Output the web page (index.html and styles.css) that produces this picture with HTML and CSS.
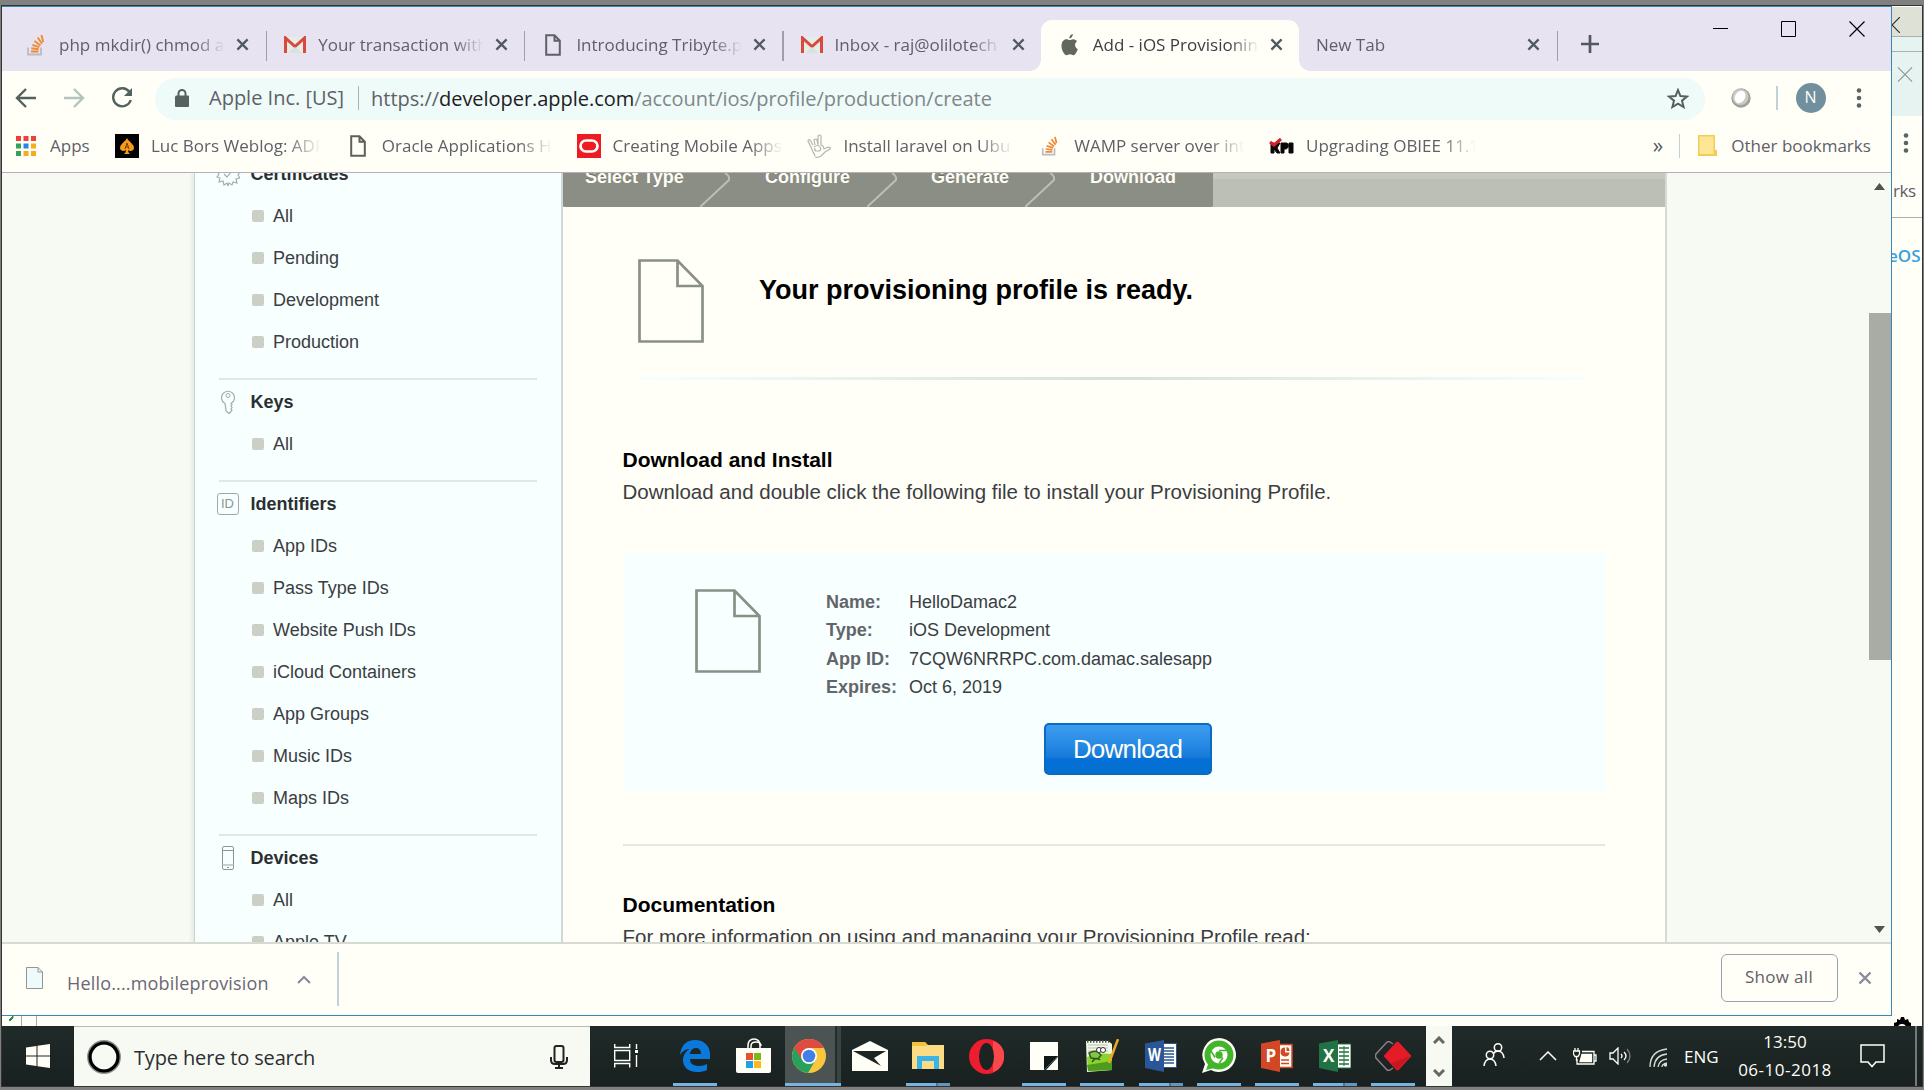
FILE: index.html
```html
<!DOCTYPE html>
<html lang="en">
<head>
<meta charset="utf-8">
<title>Add - iOS Provisioning Profile</title>
<link rel="stylesheet" href="styles.css">
</head>
<body>
<svg class="defs" width="0" height="0">
  <defs>
    <symbol id="so" viewBox="0 0 18 22"><path d="M1 13.500v7h13v-7" fill="none" stroke="#b9bcc4" stroke-width="1.800"/><path d="M4 17.500h7.500M4.300 14.300l7.400 .900M5.300 10.800l7 2.300M7.500 7l6 4.500M10.700 3.500l4.400 6.200M14.500 1l1.700 7" stroke="#ee8a35" stroke-width="1.900" fill="none"/></symbol>
    <symbol id="gmail" viewBox="0 0 22 18"><path d="M2 1h18v16H2z" fill="#e6ece8"/><path d="M1.500 17V2L11 10.500 20.500 2v15" fill="none" stroke="#d84a3c" stroke-width="3"/><path d="M4 17l7-6 7 6z" fill="#d5e4dd"/></symbol>
    <symbol id="page" viewBox="0 0 16 22"><path d="M1.200 1.200h8.300l5.300 5.500v14H1.200zM9.500 1.200v5.500h5.300" fill="none" stroke="currentColor" stroke-width="2"/></symbol>
    <symbol id="x" viewBox="0 0 14 14"><path d="M1.500 1.500l11 11M12.500 1.500l-11 11" fill="none" stroke="currentColor" stroke-width="2.400"/></symbol>
    <symbol id="thinx" viewBox="0 0 16 16"><path d="M.500.500l15 15M15.500.500l-15 15" fill="none" stroke="currentColor" stroke-width="1.200"/></symbol>
    <symbol id="dots" viewBox="0 0 6 20"><g fill="#596563"><circle cx="3" cy="2.500" r="2.300"/><circle cx="3" cy="10" r="2.300"/><circle cx="3" cy="17.500" r="2.300"/></g></symbol>
    <symbol id="bigpage" viewBox="0 0 66 84"><path d="M1.500 1.500h38L64.500 27v55.500h-63zM39.500 1.500V27h25" fill="none" stroke="#899087" stroke-width="2.700"/></symbol>
  </defs>
</svg>

<div class="behind">
  <div class="behind-caption"><svg width="8" height="16"><path d="M8 0L0 8l8 8" fill="none" stroke="#333" stroke-width="1.200"/></svg></div><div class="behind-band"></div>
  <div class="behind-tool"><svg class="behind-x"><use href="#thinx"/></svg></div>
  <div class="behind-menu"><svg width="6" height="20"><use href="#dots"/></svg></div>
  <div class="behind-marks">rks</div>
  <div class="behind-logo">eOS</div>
</div>
<div class="behind-foot">
  <svg width="40" height="10"><path d="M7 4l4-4v2L8 5z" fill="#2f8a45" stroke="#2f8a45"/><path d="M19.500 0v10M34.500 0v10" stroke="#a5aaa5"/></svg>
  <svg width="18" height="12" viewBox="0 0 18 12"><path d="M1 12V7l3-1V3l3 1 1-3h3l1 3 3-1 1 3 2 1v5h-5a4 4 0 0 0-8 0z" fill="#000"/></svg>
</div>

<main class="window">
  <header class="tabs">
    <div class="tab sep"><span class="fav"><svg width="18" height="22"><use href="#so"/></svg></span><span class="title">php mkdir() chmod a</span><svg class="close"><use href="#x"/></svg></div>
    <div class="tab sep"><span class="fav"><svg width="22" height="18"><use href="#gmail"/></svg></span><span class="title">Your transaction with</span><svg class="close"><use href="#x"/></svg></div>
    <div class="tab sep"><span class="fav"><svg width="16" height="22"><use href="#page"/></svg></span><span class="title">Introducing Tribyte.p</span><svg class="close"><use href="#x"/></svg></div>
    <div class="tab"><span class="fav"><svg width="22" height="18"><use href="#gmail"/></svg></span><span class="title">Inbox - raj@olilotech</span><svg class="close"><use href="#x"/></svg></div>
    <div class="tab active"><span class="fav"><svg width="17" height="22" viewBox="0 0 17 20" preserveAspectRatio="none"><path d="M11.800 0c.2 2-1.500 4-3.500 4C8 2.200 10 .3 11.800 0zM8.700 5.500c1 0 2-.9 3.800-.8 1.500.1 2.800.8 3.500 1.900-3 1.900-2.300 5.900.8 7.100-.8 2.300-2.500 5.500-4.200 5.600-1.300 0-1.900-.8-3.600-.8s-2.300.8-3.500.8C3.700 19.200.5 15 .5 10.800c0-4 2.500-6 4.800-6 1.400 0 2.500.7 3.400.7z" fill="#61675f"/></svg></span><span class="title">Add - iOS Provisionin</span><svg class="close"><use href="#x"/></svg></div>
    <div class="tab sep plain"><span class="title">New Tab</span><svg class="close"><use href="#x"/></svg></div>
    <svg class="plus" width="18" height="18"><path d="M9 0v18M0 9h18" stroke="#52585f" stroke-width="2.700"/></svg>
    <div class="controls">
      <svg width="15" height="16"><path d="M0 7.500h15" stroke="#000"/></svg>
      <svg width="15" height="16"><path d="M.5.500h14v15H.500z" fill="none" stroke="#000"/></svg>
      <svg width="16" height="16"><use href="#thinx"/></svg>
    </div>
  </header>

  <section class="toolbar">
    <svg width="21" height="20" class="t-back"><path d="M21 10H2M11 1L2 10l9 9" fill="none" stroke="#53615f" stroke-width="2.400"/></svg>
    <svg width="21" height="20" class="t-fwd"><path d="M0 10h19M10 1l9 9-9 9" fill="none" stroke="#b4c3c1" stroke-width="2.400"/></svg>
    <svg width="22" height="22" viewBox="0 0 22 22" class="t-load"><path d="M18.500 5A9 9 0 1 0 19.800 13" fill="none" stroke="#53615f" stroke-width="2.400"/><path d="M21 1v8h-8z" fill="#53615f"/></svg>
    <div class="omnibox">
      <svg width="14" height="18"><path d="M1 6.500h12a1 1 0 0 1 1 1V17a1 1 0 0 1-1 1H1a1 1 0 0 1-1-1V7.500z" fill="#56625f"/><path d="M3.500 7V4.500a3.500 3.500 0 0 1 7 0V7" fill="none" stroke="#56625f" stroke-width="2"/></svg>
      <span class="org">Apple Inc. [US]</span>
      <span class="url">https://<b>developer.apple.com</b><i>/account/ios/profile/production/create</i></span>
      <svg class="star" width="22" height="21" viewBox="0 0 22 21"><path d="M11 2l2.400 6 6.600.500-5 4.200 1.600 6.300-5.600-3.400L5.400 19 7 12.700 2 8.500 8.600 8z" fill="none" stroke="#52605e" stroke-width="2"/></svg>
    </div>
    <svg class="ball" width="20" height="20"><circle cx="10" cy="10" r="9.700" fill="#9fa29b"/><circle cx="9.500" cy="9" r="8" fill="#c9cbc5"/><ellipse cx="9" cy="9" rx="5" ry="6.500" fill="#fff" transform="rotate(30 9 9)"/></svg>
    <span class="vbar"></span>
    <span class="avatar">N</span>
    <svg width="6" height="20" class="menu"><use href="#dots"/></svg>
  </section>

  <nav class="bookmarks">
    <div class="bm apps"><svg width="20" height="20"><g><path d="M0 0h5v5H0zM7.500 0h5v5h-5zM15 0h5v5h-5z" fill="#ee4136"/><path d="M0 7.500h5v5H0zM0 15h5v5H0z" fill="#35a25a"/><path d="M7.500 7.500h5v5h-5z" fill="#2288e8"/><path d="M15 7.500h5v5h-5zM7.500 15h5v5h-5zM15 15h5v5h-5z" fill="#f2ad1e"/></g></svg><span>Apps</span></div>
    <div class="bm"><svg width="24" height="24"><path d="M0 0h24v24H0z"/><path d="M12 4c2 4 7 6 7 10 0 3-4 4-6 2 0 2 1 3 2 4H9c1-1 2-2 2-4-2 2-6 1-6-2 0-4 5-6 7-10z" fill="#f59a1b"/><path d="M10 15l2-6 2 6m-3.300-2h2.600" stroke="#713d0b" fill="none"/></svg><span>Luc Bors Weblog: ADF</span></div>
    <div class="bm"><span class="ico"><svg width="16" height="22"><use href="#page"/></svg></span><span>Oracle Applications H</span></div>
    <div class="bm"><svg width="24" height="24"><path d="M0 0h24v24H0z" fill="#ee1c22"/><rect x="3.500" y="6.500" width="17" height="11" rx="5.500" fill="none" stroke="#fff" stroke-width="2.700"/></svg><span>Creating Mobile Apps</span></div>
    <div class="bm"><svg width="24" height="24" fill="none" stroke="#b2b7ae" stroke-width="1.200"><path d="M8 22q-1-3-2-4L4 13 1 7q0-2 2-1l3 5M8 11L7 6q2-2 3 0l1 5M11 10V2q2-2 3 0v9l2 1 1 3 4-2q3 0 2 2l-5 3-4 4q-3 2-6 1"/><path d="M7 13q4-3 6 0t-1 4H9q-2-1-1-3"/></svg><span>Install laravel on Ubu</span></div>
    <div class="bm"><span class="ico"><svg width="18" height="20"><use href="#so"/></svg></span><span>WAMP server over int</span></div>
    <div class="bm"><svg width="25" height="18"><path d="M2 6h3v4l3-4h3l-3 5 3 5H8l-3-4v4H2zM12 6h5c4 0 3 7-2 6v4h-3zM20 6h4v10h-4z" fill="#080808" stroke="#080808"/><path d="M1 5l4 3 7-6" stroke="#d3202b" stroke-width="3" fill="none"/></svg><span>Upgrading OBIEE 11.1</span></div>
    <div class="more">»</div><span class="vbar"></span>
    <div class="other"><svg width="19" height="22"><path d="M0 0h17v15h2v6H0z" fill="#f0ce54"/><path d="M1.500 1.500h14V19h-14z" fill="#ffe596"/></svg><span>Other bookmarks</span></div>
  </nav>

  <section class="viewport">
    <aside class="side">
      <div class="group first">
        <h3><svg width="24" height="24"><path d="M12 1l2 3 3-2 1 4 4-1-1 4 3 1-2 3 2 3-4 1 1 4-4-1-1 3-3-2-1 3-1-3-3 2-1-4-4 1 1-4-3-1 2-3-2-3 3-1-1-4 4 1 1-4 3 2zM8 12l3 3 5-6" fill="none" stroke="#a0aba8" stroke-width="1.100"/></svg>Certificates</h3>
        <ul><li>All</li><li>Pending</li><li>Development</li><li>Production</li></ul>
      </div>
      <div class="group">
        <h3><svg width="24" height="24"><path d="M9 13.500a6.500 6.500 0 1 1 6 0l1 1-1 1.500 1 1.500-1 1.500 1 1.500-3 3.200-3-3z" fill="none" stroke="#a0aba8" stroke-width="1.200"/><circle cx="12" cy="5.500" r="2" fill="none" stroke="#a0aba8"/></svg>Keys</h3>
        <ul><li>All</li></ul>
      </div>
      <div class="group">
        <h3><span class="idbox">ID</span>Identifiers</h3>
        <ul><li>App IDs</li><li>Pass Type IDs</li><li>Website Push IDs</li><li>iCloud Containers</li><li>App Groups</li><li>Music IDs</li><li>Maps IDs</li></ul>
      </div>
      <div class="group">
        <h3><svg width="24" height="24"><rect x="6.500" y=".5" width="11" height="23" rx="1.500" fill="none" stroke="#8a9693"/><path d="M6.500 4.500h11" stroke="#8a9693"/><path d="M6.500 19h11" stroke="#b5c2bf" stroke-width="1.500"/><path d="M11 21.500h2" stroke="#8a9693"/></svg>Devices</h3>
        <ul><li>All</li><li>Apple TV</li></ul>
      </div>
    </aside>

    <article class="content">
      <div class="steps">
        <div class="done">
          <span class="s1">Select Type</span><svg class="chev"><path d="M25 0q5 3 4 7L0 34" class="chevline"/></svg>
          <span class="s2">Configure</span><svg class="chev"><path d="M25 0q5 3 4 7L0 34" class="chevline"/></svg>
          <span class="s3">Generate</span><svg class="chev"><path d="M25 0q5 3 4 7L0 34" class="chevline"/></svg>
          <span class="s4">Download</span>
        </div>
      </div>
      <div class="ready"><svg width="66" height="84"><use href="#bigpage"/></svg><h1>Your provisioning profile is ready.</h1></div>
      <div class="glow"></div>
      <h2 class="h-install">Download and Install</h2>
      <p>Download and double click the following file to install your Provisioning Profile.</p>
      <div class="card">
        <svg width="66" height="84"><use href="#bigpage"/></svg>
        <div class="info">
          <dl><dt>Name:</dt><dd>HelloDamac2</dd><dt>Type:</dt><dd>iOS Development</dd><dt>App ID:</dt><dd>7CQW6NRRPC.com.damac.salesapp</dd><dt>Expires:</dt><dd>Oct 6, 2019</dd></dl>
          <button class="download">Download</button>
        </div>
      </div>
      <hr>
      <h2>Documentation</h2>
      <p>For more information on using and managing your Provisioning Profile read:</p>
    </article>
    <div class="scroll">
      <svg width="11" height="7"><path d="M0 7l5.500-7L11 7z" fill="#4f534e"/></svg>
      <div class="thumb"></div>
      <svg width="11" height="7"><path d="M0 0l5.500 7L11 0z" fill="#4f534e"/></svg>
    </div>
  </section>

  <footer class="shelf">
    <svg class="file" width="17" height="22"><path d="M.500.500H12l4.500 4.500v16.500H.500z" fill="#effbfb" stroke="#8b9897"/><path d="M12 .5V5h4.500" fill="none" stroke="#8b9897"/></svg>
    <span class="fname">Hello....mobileprovision</span>
    <svg class="up" width="14" height="9"><path d="M1 8l6-6 6 6" fill="none" stroke="#8a8c9b" stroke-width="2.200"/></svg>
    <span class="shelfbar"></span>
    <button class="showall">Show all</button>
    <svg class="shelfx" width="14" height="14"><use href="#x"/></svg>
  </footer>
</main>

<footer class="taskbar">
  <div class="start"><svg width="24" height="24"><path d="M0 3.500l10.500-1.600V11.500H0zM11.500 1.700L24 0v11.500H11.500zM0 12.500h10.500v9.600L0 20.500zM11.500 12.500H24V24l-12.500-1.700z" fill="#fffff8"/></svg></div>
  <div class="search">
    <svg width="34" height="34"><circle cx="17" cy="17" r="14.700" fill="none" stroke="#8b8e88" stroke-width="4.500"/><circle cx="17" cy="17" r="14" fill="none" stroke="#000" stroke-width="3.200"/></svg>
    <span>Type here to search</span>
    <svg width="18" height="24"><rect x="4.500" y="1" width="9" height="16" rx="2" fill="none" stroke="#222" stroke-width="2"/><path d="M1 12v3q0 4 4 4h8q4 0 4-4v-3M9 19v4M5 23h8" fill="none" stroke="#222" stroke-width="2"/></svg>
  </div>
  <div class="taskview"><svg width="25" height="24" fill="none" stroke="#fffff8" stroke-width="1.400"><path d="M.7 0v3.500h15V0M.7 6.500h15v10H.700zM.7 23.500v-4h15v4M22.500 0v5M22.500 11v12"/><path d="M21 7.500h3" stroke-width="3"/></svg></div>
  <div class="apps-row">
    <div class="app run"><svg width="30" height="32" viewBox="0 0 30 32"><path d="M0 15C1 5 7 0 15 0c9 0 15 6 15 14v5H10c0 5 4 7 9 7 3 0 6-1 8-2v6c-3 1.500-6 2-10 2C8 32 3 27 3 20c0-5 3-9 7-11C5 9 2 12 0 15zm10-1h11c0-4-2-6-5-6s-5.500 2-6 6z" fill="#0b78dc"/></svg></div>
    <div class="app"><svg width="35" height="36"><path d="M0 10h35v23a2 2 0 0 1-2 2H2a2 2 0 0 1-2-2z" fill="#fffff8"/><path d="M12 10V8q0-7 6-7t6 7v2M15 10V8q0-4 5-4t5 4" fill="none" stroke="#fffff8" stroke-width="1.500"/><path d="M10 15h7v7h-7z" fill="#e9502d"/><path d="M18 15h7v7h-7z" fill="#7fb718"/><path d="M10 23h7v7h-7z" fill="#1da2e8"/><path d="M18 23h7v7h-7z" fill="#fbb91a"/></svg></div>
    <div class="app run chrome"><svg width="34" height="34" viewBox="0 0 34 34"><circle cx="17" cy="17" r="17" fill="#f9c73c"/><path d="M17 17L2.300 8.500A17 17 0 0 0 16 34l7.500-13z" fill="#28a15c"/><path d="M2.300 8.500A17 17 0 0 1 32 9H17l-7 12z" fill="#df4c3f"/><circle cx="17" cy="17" r="8" fill="#fffff8"/><circle cx="17" cy="17" r="6.300" fill="#427fe6"/></svg></div>
    <div class="app"><svg width="36" height="30"><path d="M0 9L18 0l18 9v21H0z" fill="#fffff8"/><path d="M1 10l33 0-12 7 7 8L1 10z" fill="#1b2423"/></svg></div>
    <div class="app run dual"><svg width="32" height="28"><path d="M0 0h13l3 3h16v24H0z" fill="#fbdc85"/><path d="M0 0h13l2 4H0z" fill="#f5bf38"/><path d="M5 27V14h22v13h-5v-8H10v8z" fill="#38b4e8"/></svg></div>
    <div class="app"><svg width="35" height="35"><ellipse cx="17.500" cy="17.500" rx="17.500" ry="17.500" fill="#ed1c2e"/><path d="M24 2c16 4 14 27 0 31z" fill="#f9474c"/><ellipse cx="17.500" cy="17.500" rx="7.500" ry="13.500" fill="#1b2423"/></svg></div>
    <div class="app run"><svg width="28" height="28"><path d="M0 0h28v14L14 28H0z" fill="#fffff8"/><path d="M14 28V14h14z" fill="#111918"/><path d="M16 28l12-13v13z" fill="#fffff8"/></svg></div>
    <div class="app run"><svg width="34" height="34" viewBox="0 0 34 34"><path d="M1 2h22l4 3v26l-25 2z" fill="#f3f7e8"/><path d="M2 18q12-5 25-3v16l-24 1z" fill="#8bd42c"/><path d="M2 26l25-4v9l-24 1z" fill="#4f9c1c"/><path d="M3 6h20M3 9h20M3 12h20" stroke="#b5bfb6"/><path d="M2 2.500h22" stroke="#4a5550" stroke-width="2.500" stroke-dasharray="1.500 1.500"/><path d="M4 14q5-3 9-1l3 3-3 4-7-1zM7 23q4-6 8-2" stroke="#31591c" stroke-width="1.500" fill="#86c545"/><circle cx="14" cy="11" r="2.500" fill="#fff" stroke="#333"/><circle cx="18" cy="11" r="2.500" fill="#fff" stroke="#333"/><path d="M33 0l-9 24" stroke="#efa72a" stroke-width="2.500"/></svg></div>
    <div class="app run dual"><svg width="32" height="32"><path d="M17 3.500h14.500v24H17z" fill="#fffff8" stroke="#295598"/><path d="M19 8h10M19 11h10M19 14h10M19 17h10M19 20h10M19 23h10" stroke="#295598" stroke-width="1.300"/><path d="M0 3.500L19 0v32L0 28z" fill="#2a5699"/><text x="3" y="21" class="letter" textLength="13" lengthAdjust="spacingAndGlyphs">W</text></svg></div>
    <div class="app run"><svg width="34" height="36" viewBox="0 0 34 36"><path d="M17 0a17 17 0 1 1-8 32l-9 3 3-9A17 17 0 0 1 17 0z" fill="#fffff8"/><circle cx="17" cy="17" r="14.500" fill="#43b52d"/><path d="M4 32l3-8 6 6z" fill="#43b52d"/><circle cx="17" cy="17" r="8.500" fill="#fffff8"/><circle cx="17" cy="17" r="3.700" fill="#43b52d"/><path d="M17 12.500h8M13 19.500l-4-6.500M21 19.500l-4 6" stroke="#43b52d" stroke-width="1.500"/></svg></div>
    <div class="app run"><svg width="32" height="32"><path d="M17 4.500h14v23H17z" fill="#fffff8" stroke="#d24726" stroke-width="1.500"/><path d="M24 7.500a4.500 4.500 0 1 0 4.500 5H24z" fill="#d24726"/><path d="M25.500 7q3 .5 3 4h-3z" fill="#d24726"/><path d="M20 20h8M20 23.500h8" stroke="#d24726" stroke-width="1.500"/><path d="M0 3.500L19 0v32L0 28z" fill="#d24726"/><text x="4.500" y="22" class="letter">P</text></svg></div>
    <div class="app run dual"><svg width="32" height="32"><path d="M17 4h15v24H17z" fill="#fffff8" stroke="#217346"/><path d="M20 8h10M20 12h10M20 16h10M20 20h10M20 24h10" stroke="#217346" stroke-width="1.500"/><path d="M25 6v20" stroke="#217346"/><path d="M0 3.500L19 0v32L0 28z" fill="#217346"/><text x="4" y="22" class="letter">X</text></svg></div>
    <div class="app run"><svg width="36" height="30"><path d="M18 3l-3-2q-1-1-3 0L1 13q-1 2 0 4l11 12q2 1 3 0l3-2" fill="none" stroke="#8f7d87" stroke-width="1.500"/><path d="M22.500 2L34.500 15 22.500 28 10.500 15z" fill="#e51c27" stroke="#e51c27" stroke-width="3" stroke-linejoin="round"/><path d="M35 15L22.500 29 16 22z" fill="#c91722"/></svg></div>
  </div>
  <div class="spin"><svg width="12" height="8"><path d="M1 7l5-5 5 5" fill="none" stroke="#666962" stroke-width="3"/></svg><svg width="12" height="8"><path d="M1 1l5 5 5-5" fill="none" stroke="#666962" stroke-width="3"/></svg></div>
  <div class="tray">
    <svg class="people" width="22" height="24" fill="none" stroke="#fffff8" stroke-width="1.500"><circle cx="15" cy="4.500" r="3.700"/><circle cx="7" cy="12" r="3.700"/><path d="M1 23q1-7 6-7t6 7M10 11q2-3 5-3 5 0 6 7"/></svg>
    <svg class="caret" width="18" height="10"><path d="M1 9l8-8 8 8" fill="none" stroke="#fffff8" stroke-width="1.500"/></svg>
    <svg class="batt" width="24" height="17" fill="none" stroke="#fffff8" stroke-width="1.300"><path d="M9 3.500h12v12.500H4v-5M21 7h2v6h-2"/><path d="M9 6.500h9.500v7H7z" fill="#fffff8"/><path d="M.5 3h6v3L5 8.500H2L.5 6zM2 0v3M5 0v3M3.500 9v4"/></svg>
    <svg class="vol" width="23" height="18" fill="none" stroke="#fffff8" stroke-width="1.300"><path d="M1 6h3l5-5v16l-5-5H1zM12 7q2 2 0 4"/><path d="M15 5q4 4 0 8"/><path d="M18 2q6 7 0 14" stroke="#78807e"/></svg>
    <svg class="wifi" width="19" height="19" fill="none" stroke="#d8dcd5" stroke-width="1.300"><path d="M1 19Q1 3 18 1M5 19Q6 7 18 6M9 19q1-7 9-8M13 19q0-3 5-4"/><circle cx="16.500" cy="17" r="1" fill="#fffff8"/></svg>
    <span class="lang">ENG</span>
    <span class="clock"><span>13:50</span><span class="date">06-10-2018</span></span>
    <svg class="note" width="25" height="24"><path d="M1 1h23v17h-8l-4 4.500L8 18H1z" fill="none" stroke="#fffff8" stroke-width="1.500"/></svg>
    <span class="peek"></span>
  </div>
</footer>
</body>
</html>
```
FILE: styles.css
```css
* { box-sizing: border-box; }
body { margin: 0; width: 1924px; height: 1090px; overflow: hidden; position: relative; background: #808080; font-family: "Open Sans", "Noto Sans", sans-serif; }
body::before { content: ""; position: absolute; inset: 5px 1px 3px 1px; background: #fffff8; border: 1px solid #333; border-bottom-width: 2px; }
svg { display: block; flex: none; }
.defs { position: absolute; }
button { font-family: inherit; margin: 0; padding: 0; }

/* window partly hidden behind the browser */
.behind { position: absolute; left: 1891px; top: 7px; width: 31px; height: 1019px; overflow: hidden; }
.behind-caption { height: 30px; background: #dde1d6; border-bottom: 1px solid #a4b1ae; padding: 10px 0 0 0; }
.behind-caption svg { margin-left: 1px; }
.behind-band { height: 15px; background: #e6f4f1; border-bottom: 1px solid #a4b1ae; }
.behind-tool { height: 64px; background: #e6f3f1; padding: 15px 0 0 6px; color: #8b9593; }
.behind-x { width: 16px; height: 15px; }
.behind-menu { padding: 17px 0 0 12px; height: 60px; }
.behind-marks { height: 42px; border-bottom: 1px solid #b3a8b1; font-size: 17px; line-height: 29px; color: #5f5c68; padding-left: 2px; letter-spacing: -.4px; }
.behind-logo { font: 600 17px/20px "Open Sans", sans-serif; color: #3aa0e0; margin: 28px 0 0 -3px; }
.behind-foot { position: absolute; left: 2px; top: 1016px; width: 1909px; height: 10px; display: flex; justify-content: space-between; }

.window { position: absolute; left: 2px; top: 6px; width: 1889.500px; height: 1010px; border: 1px solid #3a86b4; border-left: 0; background: #fffff8; display: flex; flex-direction: column; }

.tabs { height: 64px; background: #e7e3f1; padding: 13px 0 0 6px; display: flex; flex: none; position: relative; }
.tab { width: 258.200px; height: 51px; display: flex; align-items: center; padding: 0 0 2px 18px; position: relative; color: #5f6068; }
.tab.sep::after { content: ""; position: absolute; right: -1px; top: 11px; width: 1.500px; height: 30px; background: #a19eab; }
.fav { width: 22px; margin-right: 12px; display: flex; justify-content: center; }
.title { width: 166px; font-size: 17px; white-space: nowrap; overflow: hidden; mask-image: linear-gradient(90deg, #000 82%, transparent 100%); }
.tab:first-child .fav { margin-left: -1px; }
.tab .close { width: 13px; height: 13px; margin-left: 11px; color: #52585f; }
.tab.active { background: #fffff8; border-radius: 11px 11px 0 0; color: #3c3d44; }
.tab.active::before, .tab.active::after { content: ""; position: absolute; bottom: 0; width: 11px; height: 11px; }
.tab.active::before { left: -11px; background: radial-gradient(circle at 0 0, #e7e3f1 10.500px, #fffff8 11px); }
.tab.active::after { right: -11px; background: radial-gradient(circle at 100% 0, #e7e3f1 10.500px, #fffff8 11px); z-index: 1; }
.tab.plain .title { width: 200px; }
.tab.plain .title { margin-left: -1px; }
.tab.plain .close { margin-left: 11px; }
.plus { margin: 15px 0 0 24px; }
.controls { margin-left: auto; padding: 1px 26px 0 0; display: flex; gap: 53px; }

.toolbar { height: 56px; flex: none; display: flex; align-items: center; padding: 0 0 2px 13px; }
.t-fwd { margin-left: 28px; }
.t-load { margin-left: 26px; }
.omnibox { margin: 1px 0 0 22px; width: 1550px; height: 42px; border-radius: 21px; background: #eefbf9; display: flex; align-items: center; padding: 0 16px 1px 20px; font-size: 20px; color: #5f6068; }
.org { margin-left: 20px; padding-right: 14px; border-right: 1.500px solid #a8b3b2; line-height: 24px; }
.url { margin-left: 12px; letter-spacing: -.04px; }
.url b { font-weight: 400; color: #1d2024; }
.url i { font-style: normal; color: #818789; }
.star { margin-left: auto; }
.ball { margin-left: 26px; }
.vbar { width: 1.500px; height: 24px; background: #bfd3d6; }
.toolbar .vbar { margin-left: 25px; }
.avatar { margin-left: 18px; width: 30px; height: 30px; border-radius: 50%; background: #70909e; color: #fffff8; font-size: 16px; line-height: 29px; text-align: center; }
.menu { margin-left: 30px; }

.bookmarks { height: 46px; flex: none; display: flex; align-items: center; padding: 0 0 7px 14px; font-size: 17px; color: #5f6068; border-bottom: 1px solid #b9aeb8; }
.bm { width: 230.800px; display: flex; align-items: center; gap: 12px; white-space: nowrap; flex: none; }
.bm > span:last-child, .other > span { width: 170px; overflow: hidden; line-height: 26px; padding-bottom: 1px; }
.bm > span:last-child { mask-image: linear-gradient(90deg, #000 80%, transparent 100%); }
.bm.apps { width: 99px; gap: 14px; }
.bm.apps > span:last-child { width: auto; mask-image: none; }
.ico { width: 24px; display: flex; justify-content: center; color: #5d6157; }
.more { margin-left: 153px; width: 10px; font-size: 21px; line-height: 20px; padding-bottom: 2px; color: #52585f; }
.bookmarks .vbar { margin-left: 16px; }
.other { display: flex; align-items: center; gap: 14px; margin-left: 18px; white-space: nowrap; }
.other > span { width: auto; }

.viewport { flex: none; height: 769px; background: #f7faf2; display: flex; padding-left: 192px; overflow: hidden; font-family: "Liberation Sans", Arial, sans-serif; }
.side { width: 369px; flex: none; background: #f7ffff; border-left: 1.500px solid #c9d2d0; border-right: 2px solid #ced8d5; padding: 0 24px 0 24px; box-shadow: -3px 0 3px #e9ede5; }
.group { border-top: 2px solid #e0e8e3; padding: 1px 0 15px; }
.group.first { border: 0; padding-top: 0; margin-top: -20px; }
.group h3 { margin: 0; height: 42px; display: flex; align-items: center; gap: 11px; font-size: 18px; color: #2c2f32; margin-left: -3.500px; }
.idbox { width: 22px; height: 22px; border: 1.500px solid #a0aba8; border-radius: 3px; font: 13px/20px "Liberation Sans", sans-serif; color: #8a9693; text-align: center; margin: 0 1px; }
.group ul { list-style: none; margin: 0; padding: 0 0 0 33px; }
.group li { height: 42px; display: flex; align-items: center; gap: 9px; font-size: 18px; color: #3b3d42; }
.group li::before { content: ""; width: 12px; height: 12px; border-radius: 2px; background: #cbcfc6; }

.content { width: 1104px; flex: none; background: #fffff8; border-right: 2px solid #d6dad1; padding: 0 60px 0 59.500px; }
.steps { height: 34px; margin: 0 -60px 0 -59.500px; background: linear-gradient(#c5c8bf 6px, #bcbfb6 6px); }
.done { width: 650px; height: 34px; background: #8b8e84; border-radius: 0 0 2px 2px; padding-left: 22px; color: #fffff8; font: bold 18px/9px "Liberation Sans", Arial, sans-serif; display: flex; }
.done span { white-space: nowrap; text-shadow: 0 -1px 0 #6f7269; }
.s1 { width: 115px; } .s2 { width: 102px; margin-left: 35px; } .s3 { width: 94px; margin-left: 34px; } .s4 { margin-left: 35px; }
.chev { width: 30px; height: 34px; }
.chevline { fill: none; stroke: #bcc0b6; stroke-width: 2; }
.ready { display: flex; padding: 52px 0 0 15px; height: 170px; }
.ready h1 { font-size: 27px; line-height: 32px; margin: 15px 0 0 55.500px; color: #000; font-weight: bold; }
.glow { height: 3px; margin: 0 15px 65px; background: linear-gradient(90deg, #f7ffff, #d8e0dd 50%, #f7ffff); }
h2 { margin: 0; font-size: 21px; line-height: 30px; color: #000; }
p { margin: 0; font-size: 20.500px; line-height: 34px; color: #3b3d42; white-space: nowrap; }
.card { margin-top: 44px; height: 238px; width: 982px; background: #f7ffff; padding: 36px 0 0 72px; display: flex; }
.info { margin-left: 65.500px; width: 385.500px; }
dl { margin: -1px 0 0; display: grid; grid-template-columns: 83px 1fr; font-size: 18px; line-height: 28.300px; color: #3b3d42; }
dt { font-weight: bold; color: #62656a; }
dd { margin: 0; white-space: nowrap; }
.download { display: block; margin: 22px 0 0 auto; width: 168px; height: 52px; border: 2px solid #0a6cc0; border-radius: 5px; background: linear-gradient(#3d9cef, #2a8de6 35%, #1579d8 68%, #0470d8 70%, #0470d0); color: #fffff8; font: 26px/46px "Liberation Sans", Arial, sans-serif; letter-spacing: -.8px; }
hr { border: 0; height: 2px; width: 982px; background: #e4e9e0; margin: 53px 0 44px; }
.scroll { margin-left: auto; width: 22px; height: 769px; padding-top: 10px; display: flex; flex-direction: column; align-items: center; }
.scroll svg { margin-right: 1px; }
.thumb { width: 22px; height: 347px; margin: 123px 0 266px; background: #a9aca5; }

.shelf { height: 72px; border-top: 2px solid #d6dad1; display: flex; align-items: center; padding-left: 24px; }
.file { margin-top: -2px; }
.fname { margin: 7px 0 0 24px; width: 203px; font-size: 18px; letter-spacing: .17px; color: #6a6776; white-space: nowrap; }
.up { margin-left: 27px; }
.shelfbar { width: 2px; height: 54px; margin-left: 26px; background: #c0d2d6; }
.showall { margin: -2px 0 0 auto; width: 117px; height: 48px; border: 1.500px solid #98a2b4; border-radius: 6px; background: transparent; font: 17px/42px "Open Sans", sans-serif; padding-bottom: 2px; letter-spacing: .3px; color: #5f5f6c; }
.shelfx { color: #8a8c9b; margin: -2px 19px 0 20px; }

.taskbar { position: absolute; left: 2px; top: 1026px; width: 1920px; height: 60px; background: linear-gradient(#202a29, #18211f); display: flex; }
.start { width: 72px; padding: 18px 0 0 24px; }
.search { width: 516px; background: #f7faf2; border-top: 1px solid #b9bcb6; display: flex; align-items: center; padding: 0 22px 0 13px; font-size: 20px; letter-spacing: -.15px; color: #2c2f32; }
.search span { margin: 1px auto 0 13px; }
.taskview { width: 76px; padding: 18px 0 0 24px; }
.apps-row { display: flex; width: 760px; }
.app { width: 58.200px; height: 60px; flex: none; display: flex; align-items: center; justify-content: center; position: relative; }
.app.run::after { content: ""; position: absolute; bottom: 0; left: 7px; width: 44px; height: 3px; background: #76b4e6; }
.app.dual::after { background: linear-gradient(90deg, #76b4e6 30px, #44779b 30px, #44779b 32px, #6596bd 32px); }
.chrome { background: linear-gradient(90deg, #4b5453 50px, #242e2d 50px, #242e2d 52px, #3a4443 52px); width: 56px; margin: 0 0 0 2.200px; }
.app.chrome::after { left: 0; width: 56px; }
.chrome svg { margin-right: 8px; }
.letter { font: bold 17px "Open Sans", sans-serif; fill: #fffff8; }
.spin { width: 26px; background: #f7faf2; display: flex; flex-direction: column; align-items: center; justify-content: space-between; padding: 10px 0 9px; }
.tray { flex: 1; display: flex; align-items: center; color: #fffff8; font-size: 17px; }
.people { margin: -3px 0 0 31px; }
.caret { margin-left: 34px; }
.batt { margin-left: 16px; }
.vol { margin-left: 12px; }
.wifi { margin: 3px 0 0 17px; }
.lang { margin-left: 16px; width: 36px; }
.clock { width: 100px; margin-left: 15px; display: flex; flex-direction: column; text-align: center; line-height: 28px; white-space: nowrap; }
.date { letter-spacing: .5px; }
.note { margin-left: 25px; }
.peek { width: 2px; height: 60px; background: #737a79; margin-left: auto; margin-right: 5px; }
```
